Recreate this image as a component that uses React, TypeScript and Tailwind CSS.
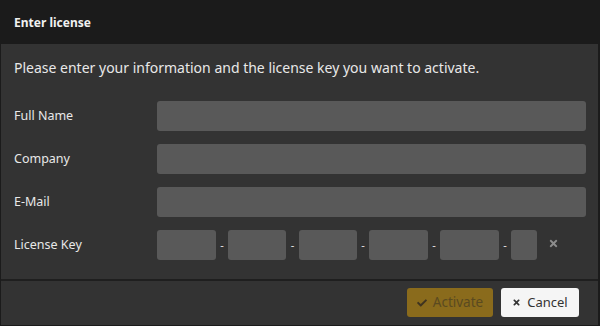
import React from "react";
import { FaCheck, FaTimes } from "react-icons/fa";

const font = { fontFamily: '"Noto Sans", "Open Sans", sans-serif' };

function Row({ label }: { label: string }) {
  return (
    <div className="flex items-center h-[30px]">
      <div className="w-[143px] text-[12.5px] text-[#e8e8e8]">{label}</div>
      <div className="flex-1 h-[30px] rounded-[3px] bg-[#595959]" />
    </div>
  );
}

export default function App() {
  const widths = [59, 58, 58, 59, 59, 26];
  const gaps = [12, 13, 12, 12, 12];
  return (
    <div className="w-[600px] h-[326px] bg-[#1b1b1b] flex flex-col" style={font}>
      <div className="h-[44px] flex items-center px-[14px] pt-[2px] text-[12px] font-bold text-[#f0f0f0] shrink-0">
        Enter license
      </div>
      <div className="flex-1 flex flex-col ml-[1px] mr-[2px] bg-[#333333]">
        <div className="flex-1 px-[13px] pt-[14px] flex flex-col">
          <div className="text-[14px] text-[#e8e8e8] leading-[20px]">
            Please enter your information and the license key you want to activate.
          </div>
          <div className="mt-[23px] mr-[-1px] flex flex-col gap-[13px]">
            <Row label="Full Name" />
            <Row label="Company" />
            <Row label="E-Mail" />
            <div className="flex items-center h-[30px]">
              <div className="w-[143px] text-[12.5px] text-[#e8e8e8]">License Key</div>
              <div className="flex items-center">
                {widths.map((w, i) => (
                  <React.Fragment key={i}>
                    {i > 0 && (
                      <span
                        className="text-center text-[11px] text-[#e8e8e8]"
                        style={{ width: gaps[i - 1] }}
                      >
                        -
                      </span>
                    )}
                    <div
                      className="h-[30px] rounded-[3px] bg-[#595959]"
                      style={{ width: w }}
                    />
                  </React.Fragment>
                ))}
                <FaTimes className="ml-[11px] mb-[3px] text-[#8c8c8c] w-[11px] h-[11px]" />
              </div>
            </div>
          </div>
        </div>
        <div className="h-[2px] bg-[#1f1f1f]" />
        <div className="h-[44px] flex items-center justify-end gap-[8px] pr-[19px] pb-[1px]">
          <button className="h-[29px] w-[86px] rounded-[3px] bg-[#8a6b1c] text-[#5a4a20] text-[13.5px] flex items-center justify-center gap-[6px]">
            <FaCheck className="w-[10px] h-[10px] text-[#3f3420]" />
            Activate
          </button>
          <button className="h-[29px] w-[78px] rounded-[3px] bg-[#f5f5f5] text-[#333] text-[13px] flex items-center justify-center gap-[6px]">
            <FaTimes className="w-[9px] h-[9px] text-[#333]" />
            Cancel
          </button>
        </div>
      </div>
      <div className="h-[1px] shrink-0" />
    </div>
  );
}
